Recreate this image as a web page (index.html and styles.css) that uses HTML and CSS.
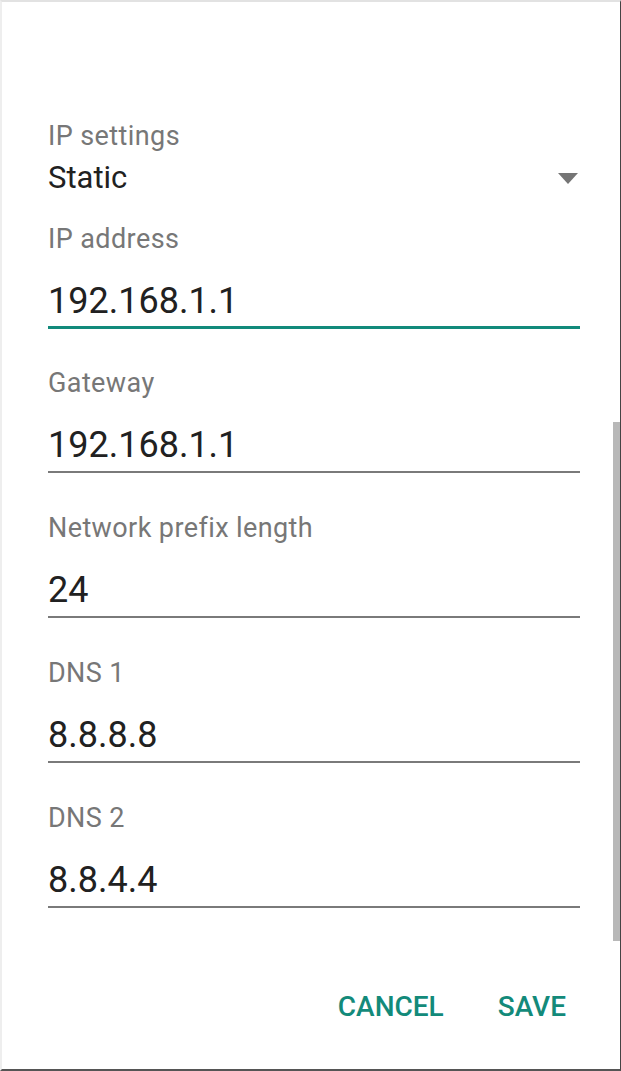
FILE: index.html
```html
<!DOCTYPE html>
<html lang="en">
<head>
    <meta charset="UTF-8">
    <meta name="viewport" content="width=device-width, initial-scale=1.0">
    <title>IP settings</title>
    <link rel="stylesheet" href="styles.css">
</head>
<body>
    <div class="dialog">
        <div class="spinner">
            <div class="field-label">IP settings</div>
            <div class="spinner-row">
                <span class="spinner-value">Static</span>
                <svg class="spinner-arrow" width="20" height="11" viewBox="0 0 20 11">
                    <path d="M0 0H20L10 11Z" fill="#757575"/>
                </svg>
            </div>
        </div>

        <div class="field focused">
            <div class="field-label">IP address</div>
            <div class="field-value">192.168.1.1</div>
        </div>

        <div class="field">
            <div class="field-label">Gateway</div>
            <div class="field-value">192.168.1.1</div>
        </div>

        <div class="field">
            <div class="field-label">Network prefix length</div>
            <div class="field-value">24</div>
        </div>

        <div class="field">
            <div class="field-label">DNS 1</div>
            <div class="field-value">8.8.8.8</div>
        </div>

        <div class="field">
            <div class="field-label">DNS 2</div>
            <div class="field-value">8.8.4.4</div>
        </div>

        <div class="actions">
            <button class="action-button">CANCEL</button>
            <button class="action-button">SAVE</button>
        </div>

        <div class="scrollbar"></div>
    </div>
</body>
</html>
```

FILE: styles.css
```css
html {
    background: #ffffff;
}
body {
    margin: 0;
    padding: 0;
    font-family: Roboto, "Noto Sans", Arial, sans-serif;
}
.dialog {
    position: relative;
    box-sizing: border-box;
    width: 621px;
    height: 1071px;
    overflow: hidden;
    background: #ffffff;
    border-top: 2px solid #e2e2e2;
    border-left: 2px solid #eeeeee;
    border-right: 1px solid #444444;
    border-bottom: 2px solid #555555;
    padding: 116px 40px 0 46px;
}
.field-label {
    font-size: 27px;
    letter-spacing: 0.4px;
    line-height: 36px;
    color: #777777;
}
.spinner-row {
    display: flex;
    justify-content: space-between;
    align-items: center;
    margin-top: 4px;
    height: 40px;
}
.spinner-value {
    font-size: 31px;
    line-height: 40px;
    color: #212121;
}
.spinner-arrow {
    margin-right: 2px;
}
.field {
    margin-top: 37px;
}
.spinner + .field {
    margin-top: 23px;
}
.field.focused + .field {
    margin-top: 36px;
}
.field-value {
    margin-top: 21px;
    font-size: 36px;
    line-height: 46px;
    color: #212121;
    padding-bottom: 3px;
    border-bottom: 2px solid #7a7a7a;
}
.field.focused .field-value {
    padding-bottom: 2px;
    border-bottom: 3px solid #128a7b;
}
.actions {
    display: flex;
    justify-content: flex-end;
    gap: 54px;
    margin-top: 81px;
    margin-right: 14px;
}
.action-button {
    background: none;
    border: none;
    padding: 0;
    font-family: Roboto, "Noto Sans", Arial, sans-serif;
    font-size: 28px;
    font-weight: 500;
    line-height: 36px;
    color: #138a7a;
    cursor: pointer;
}
.scrollbar {
    position: absolute;
    top: 420px;
    right: 0;
    width: 7px;
    height: 519px;
    background: #b8b8b8;
}
```
